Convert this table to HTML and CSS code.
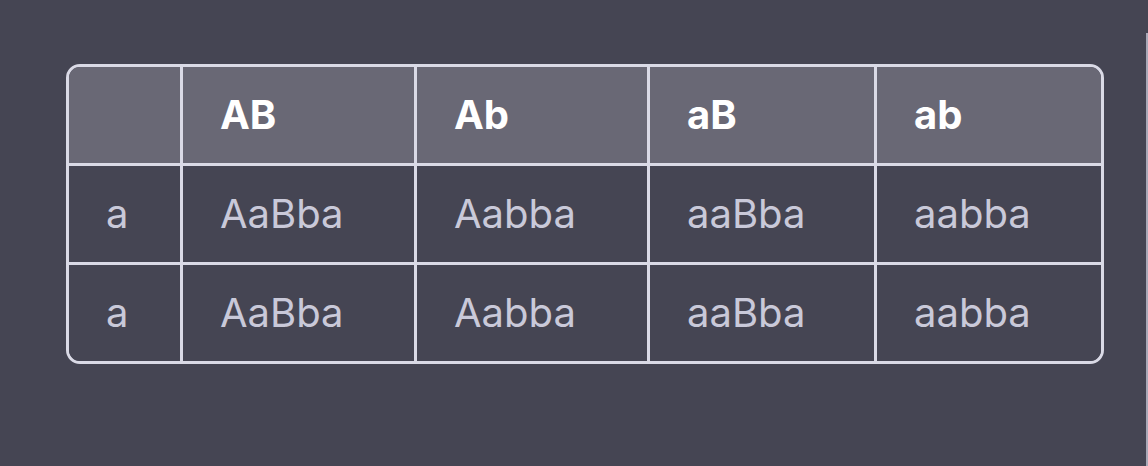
FILE: index.html
```html
<!DOCTYPE html>
<html>
<head>
<meta charset="utf-8">
<link rel="stylesheet" href="styles.css">
</head>
<body>
<div class="page">
  <main class="main">
    <div class="table-wrap">
      <table class="grid">
        <colgroup>
          <col class="c0"><col class="c1"><col class="c2"><col class="c3"><col class="c4">
        </colgroup>
        <thead>
          <tr><th></th><th>AB</th><th>Ab</th><th>aB</th><th>ab</th></tr>
        </thead>
        <tbody>
          <tr><td>a</td><td>AaBba</td><td>Aabba</td><td>aaBba</td><td>aabba</td></tr>
          <tr><td>a</td><td>AaBba</td><td>Aabba</td><td>aaBba</td><td>aabba</td></tr>
        </tbody>
      </table>
    </div>
  </main>
  <div class="edge"></div>
</div>
</body>
</html>
```
FILE: styles.css
```css
html, body {
  margin: 0;
  padding: 0;
  background: #454553;
}
.page {
  display: flex;
  width: 1148px;
  height: 466px;
}
.main {
  flex: 1;
  padding: 64px 0 0 66px;
}
.edge {
  width: 2px;
  margin-top: 33px;
  background: #a9a9b8;
}
.table-wrap {
  width: 1038px;
  box-sizing: border-box;
  border: 3px solid #dadae6;
  border-radius: 14px;
  overflow: hidden;
}
.grid {
  width: 1032px;
  border-collapse: separate;
  border-spacing: 0;
  table-layout: fixed;
  font-family: Inter, "Noto Sans", sans-serif;
}
.c0 { width: 114px; }
.c1 { width: 234px; }
.c2 { width: 233px; }
.c3 { width: 227px; }
.c4 { width: 224px; }
.grid th, .grid td {
  height: 99px;
  box-sizing: border-box;
  padding: 0 0 0 37px;
  text-align: left;
  border-right: 3px solid #dadae6;
  border-bottom: 3px solid #dadae6;
  line-height: 1;
}
.grid tr > *:last-child { border-right: none; }
.grid tbody tr:last-child > * { border-bottom: none; height: 96px; }
.grid th {
  background: #696875;
  color: #ffffff;
  font-weight: 700;
  font-size: 40px;
}
.grid td {
  background: #454553;
  color: #c9c9d9;
  font-weight: 400;
  font-size: 40px;
}
```
